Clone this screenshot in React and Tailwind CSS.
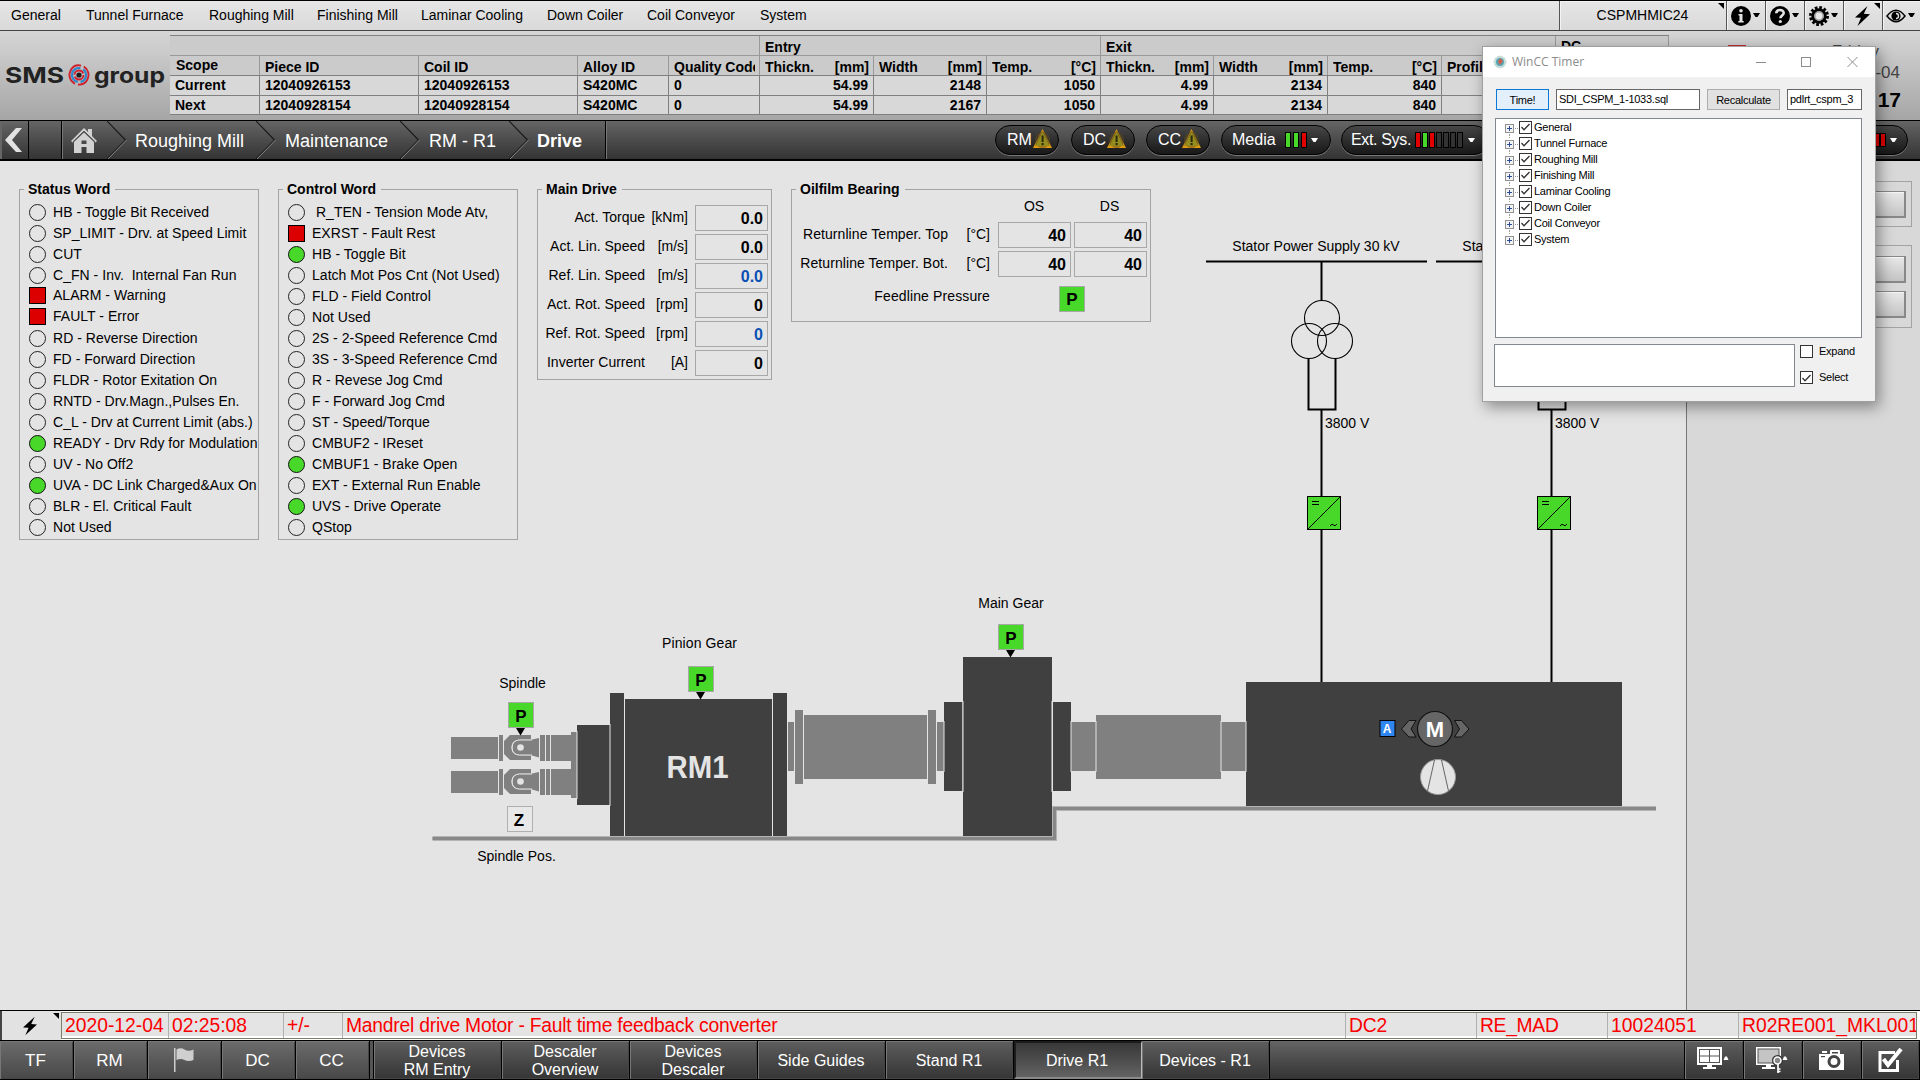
import React from "react";

const MENU = [
  ["General", "w-[75px]"],
  ["Tunnel Furnace", "w-[123px]"],
  ["Roughing Mill", "w-[108px]"],
  ["Finishing Mill", "w-[104px]"],
  ["Laminar Cooling", "w-[126px]"],
  ["Down Coiler", "w-[100px]"],
  ["Coil Conveyor", "w-[113px]"],
  ["System", "w-[60px]"],
];

const Caret = ({ className = "" }) => (
  <svg width="7" height="5" viewBox="0 0 7 5" className={className}>
    <path d="M0 0h7L4.5 4h-2z" fill="currentColor" />
  </svg>
);

const Corner = () => (
  <svg width="6" height="6" className="absolute right-[2px] top-[2px]">
    <path d="M0 0h6v6z" fill="#000" />
  </svg>
);

const Bolt = ({ w = 15, h = 20 }) => (
  <svg width={w} height={h} viewBox="0 0 15 20">
    <path d="M12.5 0L0 11.5l6 .3L2.5 20 15 8.3l-6.200-.5z" fill="#000" />
  </svg>
);

const InfoIcon = () => (
  <svg width="20" height="20" viewBox="0 0 20 20">
    <circle cx="10" cy="10" r="10" fill="#000" />
    <circle cx="10" cy="4.800" r="1.800" fill="#e4e4e4" />
    <path d="M7.500 8h4v7h1.200v1.500H7.300V15h1.200V9.500h-1z" fill="#e4e4e4" />
  </svg>
);

const HelpIcon = () => (
  <svg width="20" height="20" viewBox="0 0 20 20">
    <circle cx="10" cy="10" r="10" fill="#000" />
    <path d="M6.300 7.300C6.300 3 13.700 3 13.700 7c0 2.600-3.300 2.600-3.300 5.300" fill="none" stroke="#e4e4e4" strokeWidth="2.600" />
    <circle cx="10.300" cy="15.500" r="1.600" fill="#e4e4e4" />
  </svg>
);

const GearIcon = () => (
  <svg width="20" height="20" viewBox="0 0 20 20">
    <circle cx="10" cy="10" r="8.600" fill="none" stroke="#000" strokeWidth="2.800" strokeDasharray="2.700 1.803" />
    <circle cx="10" cy="10" r="6.200" fill="#ddd" stroke="#000" strokeWidth="3" />
    <circle cx="10" cy="10" r="4.200" fill="#e8e8e8" stroke="#9a9a9a" strokeWidth="1.500" />
  </svg>
);

const EyeIcon = () => (
  <svg width="20" height="14" viewBox="0 0 20 14">
    <path d="M1 7Q10-4.500 19 7Q10 18.500 1 7z" fill="none" stroke="#000" strokeWidth="1.500" />
    <circle cx="10" cy="7" r="4.600" fill="#000" />
    <path d="M10 4.500A2.500 2.500 0 0 1 10 9.500" fill="none" stroke="#e4e4e4" strokeWidth="1.300" />
  </svg>
);

const topBtn = "relative flex h-full items-center justify-center border-l border-[#555] shadow-[inset_1px_1px_0_#f4f4f4]";

function MenuBar() {
  return (
    <div className="flex h-[31px] border-b border-t border-b-[#444] border-t-black bg-gradient-to-b from-[#e6e6e6] to-[#d9d9d9] pl-[11px] text-[14px]">
      {MENU.map(([t, w]) => (
        <div key={t} className={`flex shrink-0 items-center whitespace-nowrap pb-px ${w}`}>{t}</div>
      ))}
      <div className="ml-auto flex">
        <div className={`${topBtn} w-[167px] pb-px pr-[1px]`}>CSPMHMIC24<Corner /></div>
        <div className={`${topBtn} w-[39px] gap-[2px] pr-[2px]`}><InfoIcon /><Caret /></div>
        <div className={`${topBtn} w-[39px] gap-[2px] pr-[2px]`}><HelpIcon /><Caret /></div>
        <div className={`${topBtn} w-[39px] gap-[2px] pr-[2px]`}><GearIcon /><Caret /></div>
        <div className={`${topBtn} w-[39px] pr-[2px]`}><Bolt /><Corner /></div>
        <div className={`${topBtn} w-[38px] gap-[2px] pr-[2px]`}><EyeIcon /><Caret /></div>
      </div>
    </div>
  );
}

function Logo() {
  return (
    <div className="flex w-[170px] shrink-0 items-center pl-[5px] pt-[3px]">
      <svg width="162" height="34" viewBox="0 0 162 34">
        <g fontFamily="Inter, Liberation Sans, sans-serif" fontWeight="700" fill="#222" fontSize="22">
          <text x="0" y="22.500" textLength="59" lengthAdjust="spacingAndGlyphs">SMS</text>
          <text x="89" y="22.500" textLength="71" lengthAdjust="spacingAndGlyphs">group</text>
        </g>
        <g fill="none" transform="translate(74 15)">
          <circle r="9.600" stroke="#cf1f2c" strokeWidth="1.900" strokeDasharray="26 3 28 3.300" transform="rotate(-60)" />
          <circle r="7" stroke="#2f86c8" strokeWidth="2.200" strokeDasharray="22 3 16 3" transform="rotate(100)" />
          <circle r="4.500" stroke="#cf1f2c" strokeWidth="1.900" strokeDasharray="12 2 12 2.300" />
          <circle r="2.600" fill="#1d1d1d" />
        </g>
      </svg>
    </div>
  );
}

const HEADS = [
  ["Scope", ""], ["Piece ID", ""], ["Coil ID", ""], ["Alloy ID", ""], ["Quality Code", ""],
  ["Thickn.", "[mm]"], ["Width", "[mm]"], ["Temp.", "[°C]"],
  ["Thickn.", "[mm]"], ["Width", "[mm]"], ["Temp.", "[°C]"], ["Profile", ""], ["", ""],
];
const ROWS = [
  ["Current", "12040926153", "12040926153", "S420MC", "0", "54.99", "2148", "1050", "4.99", "2134", "840", "", ""],
  ["Next", "12040928154", "12040928154", "S420MC", "0", "54.99", "2167", "1050", "4.99", "2134", "840", "", ""],
];
const COLS = "grid grid-cols-[89px_159px_159px_91px_91px_114px_113px_114px_113px_114px_114px_114px_114px]";

function DataTable() {
  return (
    <div className="mt-[4px] w-[1499px] shrink-0 text-[14px] font-bold leading-[16px]">
      <div className="grid h-[20px] grid-cols-[589px_341px_455px_114px] border-t border-[#808080] bg-[#cbcbcb]">
        <div />
        <div className="border-l border-[#999] pl-[5px] pt-[3px]">Entry</div>
        <div className="border-l border-[#999] pl-[5px] pt-[3px]">Exit</div>
        <div className="border-l border-r border-[#999] pl-[5px] pt-[2px]">DC</div>
      </div>
      <div className={`${COLS} h-[20px] border-t border-[#999] bg-[#cbcbcb]`}>
        {HEADS.map(([a, b], i) => (
          <div key={i} className={`flex justify-between overflow-hidden whitespace-nowrap pr-[4px] ${i ? "border-l border-[#999] pl-[5px] pt-[3px]" : "pl-[6px] pt-[1px]"}`}>
            <span className="overflow-hidden">{a}</span><span>{b}</span>
          </div>
        ))}
      </div>
      {ROWS.map((r, k) => (
        <div key={k} className={`${COLS} h-[20px] border-t border-[#808080] bg-[#d8d8d8] ${k ? "border-b" : ""}`}>
          {r.map((c, i) => (
            <div key={i} className={`pr-[5px] pt-[1px] ${i ? "border-l border-[#808080] pl-[5px]" : "pl-[5px]"} ${i > 4 ? "text-right" : ""}`}>{c}</div>
          ))}
        </div>
      ))}
    </div>
  );
}

function Header() {
  return (
    <div className="flex h-[89px] bg-gradient-to-b from-[#d6d6d6] to-[#a6a6a6]">
      <Logo />
      <DataTable />
      <div className="relative flex flex-1 flex-col items-end pr-[20px] text-[17px] text-[#444]">
        <div className="absolute left-[59px] top-[14px] h-[6px] w-[18px] bg-[#c32b33]" />
        <div className="mr-[21px] mt-[10px] h-[22px] leading-[22px]">Friday</div>
        <div className="h-[20px] leading-[20px]">2020-12-04</div>
        <div className="-mr-px mt-[4px] text-[21px] font-bold leading-[26px] text-black">02:27:17</div>
      </div>
    </div>
  );
}

const Warn = () => (
  <svg width="19" height="19" viewBox="0 0 20 19" className="-mt-[3px] ml-[1px]" preserveAspectRatio="none">
    <path d="M10 0L20 19H0z" fill="#e09a10" />
    <path d="M10 2L17.500 16.500h-15z" fill="#4b3a1c" />
    <circle cx="10" cy="11" r="8" fill="#5a4a20" opacity=".5" />
    <path d="M10 2.500L17.500 17H2.500z" fill="#948c1c" />
    <rect x="9" y="6.500" width="2.200" height="6.500" fill="#2c2a10" />
    <rect x="9" y="14" width="2.200" height="2.200" fill="#2c2a10" />
  </svg>
);

const G = "bg-[#48d82a]", R = "bg-[#e00000]", N = "bg-[#333]";
const Bars = ({ list, w }) => (
  <div className="flex">
    {list.map((c, i) => (
      <div key={i} className={`h-[14px] border border-black ${w} ${c}`} />
    ))}
  </div>
);

const pill = "flex h-[30px] items-center rounded-full border border-black bg-gradient-to-b from-[#474747] to-[#181818] text-[16px] text-white shadow-[0_1px_0_#777]";

const Sep = () => (
  <svg width="20" height="38" viewBox="0 0 20 38" className="shrink-0">
    <path d="M0 0L18.500 19L0 38" fill="none" stroke="#1a1a1a" strokeWidth="1.200" />
    <path d="M1 38L19.500 19" fill="none" stroke="#8a8a8a" strokeWidth="1" />
  </svg>
);

function NavBar() {
  return (
    <div className="flex h-[41px] border-b-2 border-t border-black bg-gradient-to-b from-[#656565] to-[#343434] text-[18px] text-white">
      <div className="flex w-[29px] items-center justify-center border-r border-black pr-px shadow-[inset_2px_2px_0_#666]">
        <svg width="19" height="24" viewBox="0 0 19 24"><path d="M18 0h-6L1 12l11 12h6L8 12z" fill="#e2e2e2" /></svg>
      </div>
      <div className="w-[33px] border-r border-black" />
      <div className="flex w-[45px] items-center border-l border-[#777] pl-[8px]">
        <svg width="26" height="25" viewBox="0 0 26 25" fill="#d2d2d2">
          <path d="M3 14L13 4.500 23 14v11h-7.500v-6h-5v6H3z" />
          <path d="M0 13L13 0l4 4V1h4v7l5 5-1.500 1.500L13 3 1.500 14.500z" />
          <path d="M1.800 13.800L13 3.200l11.200 10.600" fill="none" stroke="#4a4a4a" strokeWidth="1" />
          <rect x="10.500" y="12.500" width="5" height="3.500" fill="#4a4a4a" />
        </svg>
      </div>
      <Sep />
      <div className="flex w-[129px] items-center pl-[8px] pt-[2px]">Roughing Mill</div>
      <Sep />
      <div className="flex w-[124px] items-center pl-[9px] pt-[2px]">Maintenance</div>
      <Sep />
      <div className="flex w-[89px] items-center whitespace-nowrap pl-[9px] pt-[2px]">RM - R1</div>
      <Sep />
      <div className="flex w-[77px] items-center border-r border-black pl-[8px] pt-[2px] font-bold">Drive</div>
      <div className="w-[389px] border-l border-[#777]" />
      <div className="flex items-center">
        <div className={`${pill} w-[64px] pl-[11px]`}>RM<Warn /></div>
        <div className={`${pill} ml-[12px] w-[64px] pl-[11px]`}>DC<Warn /></div>
        <div className={`${pill} ml-[11px] w-[64px] pl-[11px]`}>CC<Warn /></div>
        <div className={`${pill} ml-[11px] w-[110px] pl-[10px]`}>
          Media
          <div className="ml-[9px] flex gap-[2px]">
            {[G, G, R].map((c, i) => <div key={i} className={`h-[16px] w-[6px] border border-black ${c}`} />)}
          </div>
          <Caret className="ml-[4px]" />
        </div>
        <div className={`${pill} ml-[10px] w-[148px] pl-[9px]`}>
          <span className="mr-[4px] whitespace-nowrap tracking-[-0.35px]">Ext. Sys.</span>
          <div className="flex gap-px">
            {[R, G, R, N, N, N, N].map((c, i) => <div key={i} className={`h-[16px] w-[6px] border border-black ${c}`} />)}
          </div>
          <Caret className="ml-[5px]" />
        </div>
      </div>
      <div className="ml-auto flex items-center pr-[12px]">
        <div className={`${pill} w-[110px] justify-end gap-[4px] pr-[10px]`}><Bars list={[R, R]} w="w-[6px]" /><Caret /></div>
      </div>
    </div>
  );
}

function Group({ title, className = "", children }) {
  return (
    <div className={`relative border border-[#a3a3a3] ${className}`}>
      {title && <div className="absolute -top-[10px] left-[4px] bg-[#e4e4e4] pl-[4px] pr-[5px] text-[14px] font-bold leading-[18px]">{title}</div>}
      {children}
    </div>
  );
}

const STATUS = [
  ["HB - Toggle Bit Received"], ["SP_LIMIT - Drv. at Speed Limit"], ["CUT"], ["C_FN - Inv.  Internal Fan Run"],
  ["ALARM - Warning", "r"], ["FAULT - Error", "r"], ["RD - Reverse Direction"], ["FD - Forward Direction"],
  ["FLDR - Rotor Exitation On"], ["RNTD - Drv.Magn.,Pulses En."], ["C_L - Drv at Current Limit (abs.)"],
  ["READY - Drv Rdy for Modulation", "g"], ["UV - No Off2"], ["UVA - DC Link Charged&Aux On", "g"],
  ["BLR - El. Critical Fault"], ["Not Used"],
];
const CONTROL = [
  [" R_TEN - Tension Mode Atv,"], ["EXRST - Fault Rest", "r"], ["HB - Toggle Bit", "g"], ["Latch Mot Pos Cnt (Not Used)"],
  ["FLD - Field Control"], ["Not Used"], ["2S - 2-Speed Reference Cmd"], ["3S - 3-Speed Reference Cmd"],
  ["R - Revese Jog Cmd"], ["F - Forward Jog Cmd"], ["ST - Speed/Torque"], ["CMBUF2 - IReset"],
  ["CMBUF1 - Brake Open", "g"], ["EXT - External Run Enable"], ["UVS - Drive Operate", "g"], ["QStop"],
];

function BitList({ items }) {
  return (
    <div className="flex flex-col pl-[9px] pt-[12px]">
      {items.map(([t, s], i) => (
        <div key={i} className={`flex h-[21px] items-center whitespace-pre text-[14px] leading-[21px] tracking-[0.03px] ${s === "r" && i > 1 ? "pb-[2px]" : ""}`}>
          <div className={`mr-[7px] size-[17px] shrink-0 border ${s === "r" ? "border-black bg-[#dc0000]" : s === "g" ? "rounded-full border-[#111] bg-[#48d82a]" : "rounded-full border-[#222]"}`} />
          {t}
        </div>
      ))}
    </div>
  );
}

const DRIVE = [
  ["Act. Torque", "[kNm]", "0.0"], ["Act. Lin. Speed", "[m/s]", "0.0"], ["Ref. Lin. Speed", "[m/s]", "0.0", 1],
  ["Act. Rot. Speed", "[rpm]", "0"], ["Ref. Rot. Speed", "[rpm]", "0", 1], ["Inverter Current", "[A]", "0"],
];

const Field = ({ children, blue }) => (
  <div className={`flex h-[26px] w-[73px] items-center justify-end border border-[#a8a8a8] pr-[4px] pt-[2px] text-[16px] font-bold ${blue ? "text-[#0a50b4]" : ""}`}>{children}</div>
);

function Diagram() {
  const K = "#404040", S = "#808080";
  const rects = [
    [571, 732, 6, 66, S], [577, 725, 33, 80, K], [610, 693, 14, 143, K], [625, 699, 147, 137, K], [773, 693, 14, 143, K],
    [787, 722, 7, 49, S], [795, 710, 8, 74, S], [804, 715, 123, 64, S], [928, 710, 8, 74, S], [937, 722, 7, 49, S],
    [944, 702, 18.500, 89, K], [963, 657, 89, 179, K], [1053, 702, 18, 89, K],
    [1071, 722, 25, 49, S], [1096, 715, 125, 64, S], [1221, 722, 25, 49, S], [1246, 682, 376, 124, K],
  ];
  const P = ({ x, y, arrow }) => (
    <g>
      <rect x={x + 0.5} y={y + 0.5} width="25" height="25" fill="#48d82a" stroke="#a8a8a8" />
      <text x={x + 13} y={y + 19.500} fontSize="17" fontWeight="700" textAnchor="middle">P</text>
      {arrow && <path d={`M${x + 8} ${y + 26}h9l-4.500 7.500z`} />}
    </g>
  );
  const Supply = () => (
    <g>
      <g fill="none" stroke="#000" strokeWidth="2">
        <path d="M1321.500 261v39M1308.500 358v51.500h27V358M1321.500 409v88M1321.500 530v152" />
        <g strokeWidth="1.100"><circle cx="1322" cy="318" r="17.500" /><circle cx="1309" cy="341" r="17.500" /><circle cx="1335" cy="341" r="17.500" /></g>
      </g>
      <text x="1325" y="428">3800 V</text>
      <rect x="1307.500" y="496.500" width="33" height="33" fill="#48d82a" stroke="#000" />
      <path d="M1308 529L1340 497M1312 501.500h7M1312 504.500h7" stroke="#000" fill="none" />
      <path d="M1330 526q2-3 3.500-1t3.500-1" stroke="#000" fill="none" />
    </g>
  );
  const Spindle = () => (
    <g fill={S}>
      <rect x="451" y="737" width="47" height="22" />
      <rect x="499" y="735" width="4" height="26" />
      <path d="M531 735v4.500h-12q-7.500 1-7.500 8t7.500 8h12v4.500h-21l-6-6v-13l6-6z" />
      <path d="M539 738v19.500l-7-2h-12.500q-7-1-7-8t7-8H532z" />
      <circle cx="520.500" cy="747.500" r="3.300" fill="#e4e4e4" />
      <path d="M532 740h-12.500q-7.500.5-7.500 7.500t7.500 7.500H532" fill="none" stroke="#e4e4e4" strokeWidth="1" />
      <rect x="540" y="735" width="5" height="26" /><rect x="546" y="735" width="4" height="26" /><rect x="551" y="735" width="20" height="26" />
    </g>
  );
  return (
    <svg className="absolute left-0 top-0" width="1687" height="849" viewBox="0 161 1687 849" fontFamily="Liberation Sans, Arial, sans-serif" fontSize="14">
      <path d="M1206 261.500h221M1436 261.500h221" stroke="#000" strokeWidth="2" />
      <text x="1316" y="251" textAnchor="middle">Stator Power Supply 30 kV</text>
      <text x="1546" y="251" textAnchor="middle">Stator Power Supply 30 kV</text>
      <Supply />
      <g transform="translate(230 0)"><Supply /></g>
      <path d="M432.500 838.500H1054.500V808.500H1656" fill="none" stroke="#b4b4b4" strokeWidth="5" />
      <path d="M432.500 838.500H1054.500V808.500H1656" fill="none" stroke="#888" strokeWidth="3" />
      {rects.map(([x, y, w, h, f], i) => <rect key={i} x={x} y={y} width={w} height={h} fill={f} />)}
      <path d="M610 724v82M624.500 699v137M772.500 699v137M787.500 721v51M944 721v51M963 701v91M1052 701v91M1071 721v51M1096 721v51M1221 721v51M1246 721v51M577 731v68" stroke="#e4e4e4" fill="none" />
      <Spindle />
      <g transform="translate(0 34)"><Spindle /></g>
      <g textAnchor="middle">
        <text x="522.500" y="688">Spindle</text>
        <text x="699.500" y="648" textLength="75">Pinion Gear</text>
        <text x="1011" y="608">Main Gear</text>
        <text x="516.500" y="861">Spindle Pos.</text>
      </g>
      <P x={508} y={702} arrow /><P x={688} y={666} arrow /><P x={998} y={624} arrow />
      <text x="666.500" y="778" fontSize="31" fontWeight="700" fill="#e4e4e4" textLength="62" lengthAdjust="spacingAndGlyphs">RM1</text>
      <rect x="507.500" y="806.500" width="25" height="25" fill="#e8e8e8" stroke="#b0b0b0" />
      <text x="519" y="826" fontSize="17" fontWeight="700" textAnchor="middle">Z</text>
      <rect x="1380" y="720.500" width="15" height="16" fill="#2f86f0" stroke="#000" />
      <text x="1387" y="733" fontSize="12" fontWeight="700" fill="#fff" textAnchor="middle">A</text>
      <g fill="#666" stroke="#111">
        <path d="M1409 720.500h7l-5 8.500 5 8h-7l-7.500-8z" />
        <path d="M1461.500 720.500h-7l5 8.500-5 8h7l7.500-8z" />
        <circle cx="1435" cy="729" r="17.500" strokeWidth="1.200" />
      </g>
      <text x="1435" y="737" fontSize="22" fontWeight="700" fill="#fff" textAnchor="middle">M</text>
      <circle cx="1438" cy="777" r="17.500" fill="#e4e4e4" stroke="#999" />
      <path d="M1434.500 760l-7 31M1441.500 760l7 31" stroke="#666" />
    </svg>
  );
}

const SideBtn = ({ className = "" }) => (
  <div className={`h-[27px] w-[180px] border border-b-2 border-r-2 border-[#888] bg-gradient-to-b from-[#e8e8e8] to-[#c4c4c4] shadow-[inset_1px_1px_0_#f6f6f6] ${className}`} />
);

function Content() {
  return (
    <div className="flex h-[849px]">
      <div className="relative flex w-[1687px] shrink-0 items-start border-r border-[#777] bg-[#e4e4e4] pl-[19px] pt-[28px]">
        <Diagram />
        <Group title="Status Word" className="h-[351px] w-[240px]"><BitList items={STATUS} /></Group>
        <Group title="Control Word" className="ml-[19px] h-[351px] w-[240px]"><BitList items={CONTROL} /></Group>
        <Group title="Main Drive" className="ml-[19px] h-[191px] w-[235px]">
          <div className="flex flex-col gap-[3px] pt-[15px]">
            {DRIVE.map(([a, u, v, b]) => (
              <div key={a} className="flex items-center justify-end whitespace-nowrap pr-[3px] text-[14px]">
                <span className="pb-px">{a}</span>
                <span className="w-[43px] pb-px text-right">{u}</span>
                <div className="ml-[7px]"><Field blue={b}>{v}</Field></div>
              </div>
            ))}
          </div>
        </Group>
        <Group title="Oilfilm Bearing" className="ml-[19px] h-[133px] w-[360px] text-[14px]">
          <div className="flex h-[32px] items-center justify-end pr-[3px]">
            <div className="w-[76px] pr-[4px] text-center">OS</div><div className="w-[73px] pr-[2px] text-center">DS</div>
          </div>
          {["Top", "Bot."].map((n) => (
            <div key={n} className="mb-[3px] flex items-center justify-end pr-[3px]">
              <span className="whitespace-pre pb-px tracking-[0.07px]">Returnline Temper. {n}</span>
              <span className="w-[42px] pb-px text-right">[°C]</span>
              <div className="ml-[8px] flex gap-[3px]"><Field>40</Field><Field>40</Field></div>
            </div>
          ))}
          <div className="mt-[9px] flex items-center justify-end pr-[65px]">
            <span className="pb-[5px] tracking-[0.12px]">Feedline Pressure</span>
            <div className="ml-[69px] flex size-[26px] items-center justify-center border border-[#a8a8a8] bg-[#48d82a] pt-px text-[17px] font-bold">P</div>
          </div>
        </Group>
      </div>
      <div className="flex flex-1 flex-col items-end bg-[#d8d8d8] pr-[8px] pt-[20px]">
        <Group className="flex h-[46px] w-[210px] justify-end pr-[5px] pt-[9px]"><SideBtn /></Group>
        <Group className="mt-[18px] flex h-[83px] w-[210px] flex-col items-end pr-[5px] pt-[10px]"><SideBtn /><SideBtn className="mt-[8px]" /></Group>
      </div>
    </div>
  );
}

function AlarmRow() {
  const cell = "flex items-center overflow-hidden whitespace-nowrap border-r border-[#b0b0b0] pl-[3px] pt-px";
  return (
    <div className="flex h-[30px] border-t border-black bg-white text-[19.300px] text-[#fb0000]">
      <div className="relative flex w-[61px] items-center justify-center border-l-2 border-[#444] bg-[#e2e2e2] pr-[4px]"><Bolt w={14} h={20} /><Corner /></div>
      <div className="mb-[1px] mt-px flex w-[1856px] border border-[#7d7d68] bg-[#e4e4e4] shadow-[inset_0_-2px_0_#fff]">
        <div className={`${cell} w-[107px]`}>2020-12-04</div>
        <div className={`${cell} w-[115px]`}>02:25:08</div>
        <div className={`${cell} w-[59px]`}>+/-</div>
        <div className={`${cell} w-[1003px] tracking-[-0.22px]`}>Mandrel drive Motor - Fault time feedback converter</div>
        <div className={`${cell} w-[131px] tracking-[-0.2px]`}>DC2</div>
        <div className={`${cell} w-[131px] tracking-[-0.3px]`}>RE_MAD</div>
        <div className={`${cell} w-[131px]`}>10024051</div>
        <div className="flex flex-1 items-center overflow-hidden whitespace-nowrap pl-[3px] pt-px">R02RE001_MKL001</div>
      </div>
    </div>
  );
}

const FlagIcon = () => (
  <svg width="20" height="24" viewBox="0 0 20 24" fill="#cfcfcf" className="-mt-[3px]">
    <rect x="0" y="0" width="1.500" height="24" />
    <path d="M2.500 1.500q4-2.500 8 0t9 0v10.500q-5 2-9 0t-8 0z" />
  </svg>
);
const Monitor = ({ children }) => (
  <svg width="33" height="26" viewBox="0 0 33 26">
    <path d="M0 0h25v18H15v2h4v2H6v-2h4v-2H0z" fill="#fff" />
    {children}
    <path d="M26.500 13h5l-1.500-3.500h-2z" fill="#fff" />
  </svg>
);

function BottomBar() {
  const b = "flex h-full items-center justify-center border-r border-black text-center shadow-[inset_1px_1px_0_#777,inset_-1px_-1px_0_#444]";
  const g = "bg-gradient-to-b from-[#5e5e5e] to-[#353535]";
  const areas = ["TF", "RM", null, "DC", "CC"];
  const pages = [
    ["Devices\nRM Entry", "w-[128px]"], ["Descaler\nOverview", "w-[128px]"], ["Devices\nDescaler", "w-[128px]"],
    ["Side Guides", "w-[128px]"], ["Stand R1", "w-[128px]"], ["Drive R1", "w-[128px]", 1], ["Devices - R1", "w-[128px]"],
  ];
  return (
    <div className="flex h-[40px] border-b border-t border-black bg-gradient-to-b from-[#656565] to-[#343434] text-[16px] leading-[18px] text-white">
      {areas.map((a, i) => (
        <div key={i} className={`${b} w-[74px] bg-gradient-to-b from-[#6c6c6c] to-[#484848] pr-[2px] pt-[2px] text-[17px]`}>{a || <FlagIcon />}</div>
      ))}
      <div className="w-[4px] border-r border-black bg-[#555]" />
      {pages.map(([t, w, on]) => (
        <div key={t} className={on
          ? `flex h-full items-center justify-center border-b-2 border-l-2 border-t-2 border-b-[#8a8a8a] border-l-[#1c1c1c] border-t-[#1c1c1c] border-r border-r-[#bbb] bg-gradient-to-b from-[#383838] to-[#636363] pr-[3px] pt-[2px] ${w}`
          : `${b} ${g} whitespace-pre pr-px pt-px ${w}`}>{t}</div>
      ))}
      <div className="ml-auto flex border-l border-black">
        <div className={`${b} ${g} w-[59px] pr-px`}>
          <Monitor><rect x="2" y="2" width="21" height="14" fill="#555" /><path d="M3 3h9v5.500H3zM13 3h9v5.500h-9zM3 9.500h9V15H3zM13 9.500h9V15h-9z" fill="#fff" /></Monitor>
        </div>
        <div className={`${b} ${g} w-[59px] pr-px`}>
          <Monitor>
            <rect x="2" y="2" width="21" height="14" fill="#c4c4c4" stroke="#555" />
            <circle cx="21.500" cy="13.500" r="3.500" fill="#777" stroke="#333" strokeWidth="4" /><circle cx="21.500" cy="13.500" r="3.500" fill="#888" stroke="#fff" strokeWidth="1.500" />
            <path d="M22 17v9M22 22h2.500M22 24.500h2.500" stroke="#fff" strokeWidth="1.700" />
          </Monitor>
        </div>
        <div className={`${b} ${g} w-[59px] pr-[2px]`}>
          <svg width="25" height="20" viewBox="0 0 25 20">
            <path d="M0 4h11V1q0-1 1-1h8q1 0 1 1v3h4v16H0z" fill="#fff" /><path d="M13 2h6v1.500h-6z" fill="#444" />
            <rect x="3" y="1" width="5" height="2" fill="#fff" /><rect x="2" y="6" width="4" height="1.200" fill="#444" />
            <circle cx="15" cy="11.500" r="5" fill="#fff" stroke="#444" strokeWidth="3" />
          </svg>
        </div>
        <div className={`${b} ${g} w-[58px] pr-px`}>
          <svg width="25" height="25" viewBox="0 0 25 25" fill="none" stroke="#fff">
            <path d="M17 4.500H2v18h17.500V12" strokeWidth="3" /><path d="M5.500 11l4.500 6L23 1" strokeWidth="4" />
          </svg>
        </div>
      </div>
    </div>
  );
}

const Check = ({ on = true, size = "size-[13px]" }) => (
  <div className={`flex ${size} shrink-0 items-center justify-center border border-[#333] bg-white`}>
    {on && <svg width="9" height="8" viewBox="0 0 9 8"><path d="M.5 4l2.500 2.700L8.500 1" fill="none" stroke="#333" strokeWidth="1.300" /></svg>}
  </div>
);

function Dialog() {
  const tree = ["General", "Tunnel Furnace", "Roughing Mill", "Finishing Mill", "Laminar Cooling", "Down Coiler", "Coil Conveyor", "System"];
  return (
    <div className="absolute left-[1482px] top-[46px] h-[356px] w-[394px] border border-[#a0a0a0] bg-[#f0f0f0] text-[11px] tracking-[-0.25px] shadow-[3px_5px_14px_rgba(0,0,0,0.4)]">
      <div className="flex h-[30px] items-center bg-white pl-[10px] text-[12px] text-[#8c8c8c]">
        <svg width="14" height="14" viewBox="0 0 14 14">
          <circle cx="7" cy="7" r="6" fill="#bfe0da" stroke="#d4d4d4" strokeDasharray="2 1.500" />
          <circle cx="7" cy="7" r="4" fill="#5aa5b5" /><path d="M7 3l3 3-3 4-2-3z" fill="#d0604c" />
        </svg>
        <span className="ml-[5px] font-['Open_Sans',sans-serif] tracking-normal">WinCC Timer</span>
        <svg width="103" height="11" viewBox="0 0 103 11" className="ml-auto mr-[16px]" fill="none" stroke="#8c8c8c">
          <path d="M0 5.500h10" /><rect x="45.500" y=".5" width="9" height="9" /><path d="M91.500 0l10 10M101.500 0l-10 10" />
        </svg>
      </div>
      <div className="mt-[12px] flex h-[21px] items-stretch pl-[13px] leading-[18px]">
        <div className="flex w-[53px] items-center justify-center border border-[#0a78d7] bg-[#e3f0fb]">Time!</div>
        <div className="ml-[7px] flex w-[144px] items-center border border-[#666] bg-white pb-[2px] pl-[2px]">SDI_CSPM_1-1033.sql</div>
        <div className="ml-[7px] flex w-[73px] items-center justify-center border border-[#adadad] bg-[#e1e1e1]">Recalculate</div>
        <div className="ml-[7px] flex w-[75px] items-center border border-[#666] bg-white pb-[2px] pl-[2px]">pdlrt_cspm_3</div>
      </div>
      <div className="ml-[12px] mt-[8px] h-[220px] w-[367px] border border-[#828790] bg-white pl-[9px]">
        {tree.map((t, i) => (
          <div key={t} className="flex h-[16px] items-center">
            <svg width="14" height="16" viewBox="0 0 14 16" className="shrink-0" fill="none">
              {i > 0 && <path d="M4.500 0v4" stroke="#999" strokeDasharray="1 1" />}
              {i < 7 && <path d="M4.500 13v3" stroke="#999" strokeDasharray="1 1" />}
              <rect x=".5" y="5.500" width="8" height="8" fill="#f4f4f4" stroke="#919191" />
              <path d="M2 9.500h5M4.500 7v5" stroke="#2b4a9b" /><path d="M10 9.500h4" stroke="#999" strokeDasharray="1 1" />
            </svg>
            <Check />
            <span className="ml-[2px] mt-px leading-[15px]">{t}</span>
          </div>
        ))}
      </div>
      <div className="mt-[6px] flex pl-[11px]">
        <div className="h-[43px] w-[301px] border border-[#828790] bg-white" />
        <div className="ml-[5px] flex flex-col gap-[13px] pt-px">
          <div className="flex items-center gap-[6px] leading-[13px]"><Check on={false} />Expand</div>
          <div className="flex items-center gap-[6px] leading-[13px]"><Check />Select</div>
        </div>
      </div>
    </div>
  );
}

export default function App() {
  return (
    <div className="relative flex h-[1080px] w-[1920px] flex-col overflow-hidden bg-[#e4e4e4] font-['Liberation_Sans',Arial,sans-serif] text-black">
      <MenuBar />
      <Header />
      <NavBar />
      <Content />
      <AlarmRow />
      <BottomBar />
      <Dialog />
    </div>
  );
}
